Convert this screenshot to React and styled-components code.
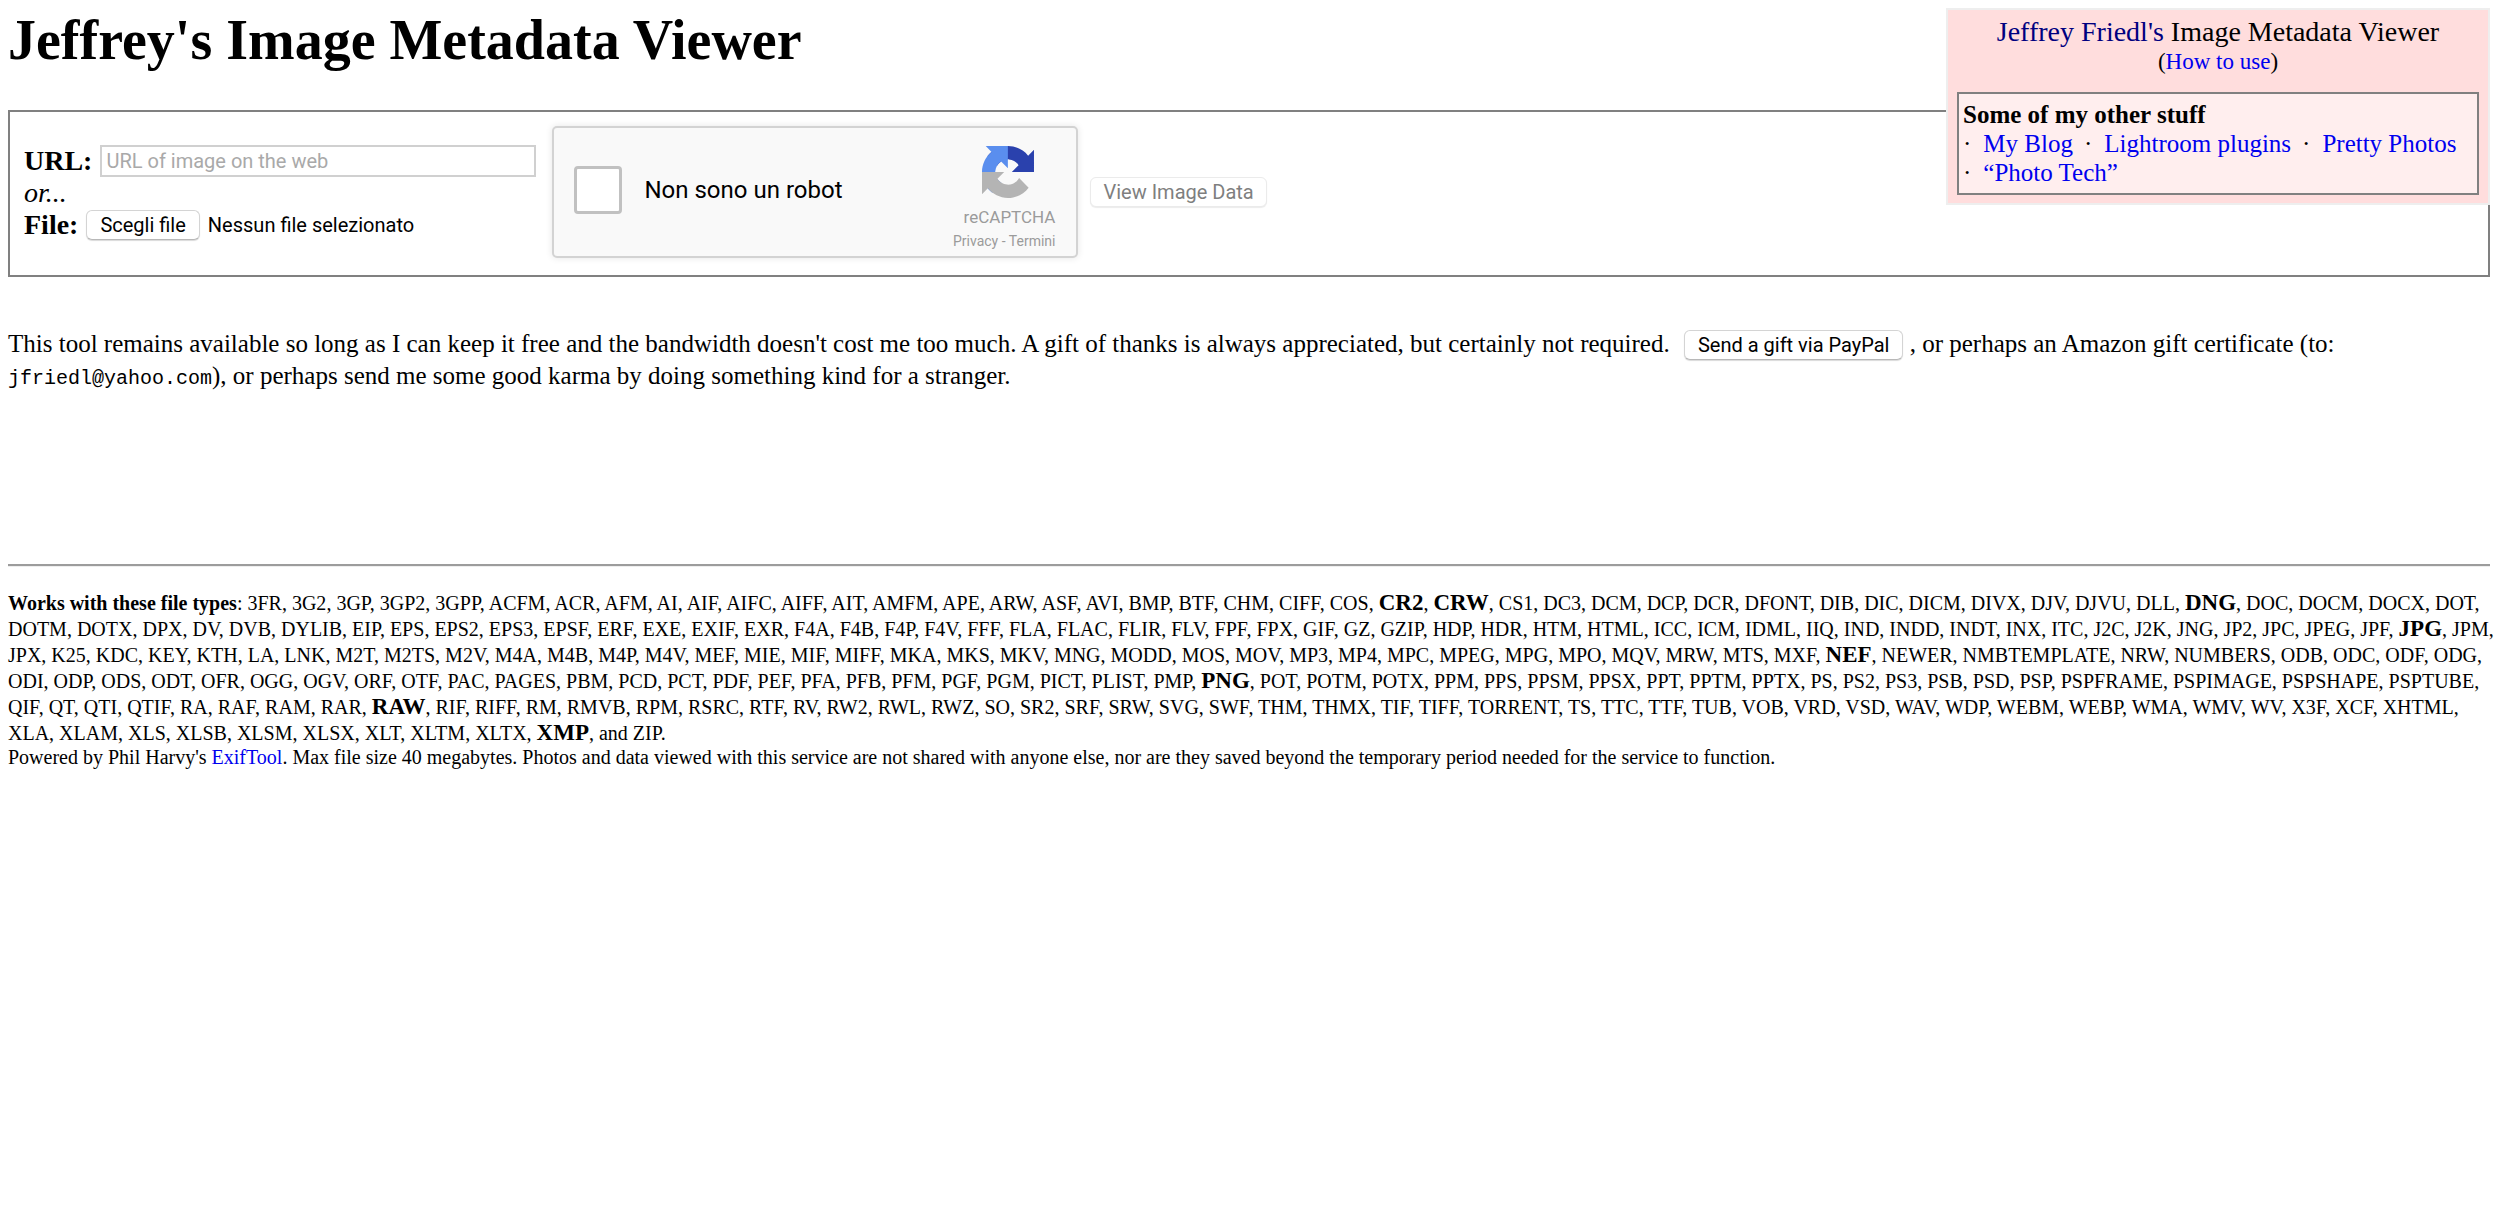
import React, {useRef, useState} from 'react';
import styled, {createGlobalStyle} from 'styled-components';

// the most popular types are drawn bigger
const POPULAR = ['CR2', 'CRW', 'DNG', 'JPG', 'NEF', 'PNG', 'RAW', 'XMP'];

const FILE_TYPES = [
  '3FR 3G2 3GP 3GP2 3GPP ACFM ACR AFM AI AIF AIFC AIFF AIT AMFM APE ARW ASF AVI BMP BTF CHM CIFF COS CR2 CRW CS1 DC3 DCM DCP DCR DFONT DIB DIC DICM DIVX DJV DJVU DLL DNG DOC DOCM DOCX DOT',
  'DOTM DOTX DPX DV DVB DYLIB EIP EPS EPS2 EPS3 EPSF ERF EXE EXIF EXR F4A F4B F4P F4V FFF FLA FLAC FLIR FLV FPF FPX GIF GZ GZIP HDP HDR HTM HTML ICC ICM IDML IIQ IND INDD INDT INX ITC J2C J2K JNG JP2 JPC JPEG JPF JPG JPM',
  'JPX K25 KDC KEY KTH LA LNK M2T M2TS M2V M4A M4B M4P M4V MEF MIE MIF MIFF MKA MKS MKV MNG MODD MOS MOV MP3 MP4 MPC MPEG MPG MPO MQV MRW MTS MXF NEF NEWER NMBTEMPLATE NRW NUMBERS ODB ODC ODF ODG',
  'ODI ODP ODS ODT OFR OGG OGV ORF OTF PAC PAGES PBM PCD PCT PDF PEF PFA PFB PFM PGF PGM PICT PLIST PMP PNG POT POTM POTX PPM PPS PPSM PPSX PPT PPTM PPTX PS PS2 PS3 PSB PSD PSP PSPFRAME PSPIMAGE PSPSHAPE PSPTUBE',
  'QIF QT QTI QTIF RA RAF RAM RAR RAW RIF RIFF RM RMVB RPM RSRC RTF RV RW2 RWL RWZ SO SR2 SRF SRW SVG SWF THM THMX TIF TIFF TORRENT TS TTC TTF TUB VOB VRD VSD WAV WDP WEBM WEBP WMA WMV WV X3F XCF XHTML',
  'XLA XLAM XLS XLSB XLSM XLSX XLT XLTM XLTX XMP',
].map((line) => line.split(' '));

const RecaptchaLogo = () => (
  <Logo viewBox="0 0 64 64" aria-hidden="true">
    <path
      fill="#2a41ad"
      d="M64 31.955l-.033-1.37V4.687l-7.16 7.16C50.948 4.674 42.033.093 32.05.093c-10.4 0-19.622 4.96-25.458 12.64l11.736 11.86a15.55 15.55 0 0 1 4.754-5.334c2.05-1.6 4.952-2.906 8.968-2.906.485 0 .86.057 1.135.163 4.976.393 9.288 3.14 11.828 7.124l-8.307 8.307L64 31.953"
    />
    <path
      fill="#5a8eee"
      d="M31.862.094l-1.37.033H4.594l7.16 7.16C4.58 13.147 0 22.06 0 32.046c0 10.4 4.96 19.622 12.64 25.458L24.5 45.768a15.55 15.55 0 0 1-5.334-4.754c-1.6-2.05-2.906-4.952-2.906-8.968 0-.485.057-.86.163-1.135.393-4.976 3.14-9.288 7.124-11.828l8.307 8.307L31.86.095"
    />
    <path
      fill="#b4b4b4"
      d="M.001 32.045l.033 1.37v25.898l7.16-7.16c5.86 7.173 14.774 11.754 24.76 11.754 10.4 0 19.622-4.96 25.458-12.64l-11.736-11.86a15.55 15.55 0 0 1-4.754 5.334c-2.05 1.6-4.952 2.906-8.968 2.906-.485 0-.86-.057-1.135-.163-4.976-.393-9.288-3.14-11.828-7.124l8.307-8.307c-10.522.04-22.4.066-27.295-.005"
    />
  </Logo>
);

const FilePicker = () => {
  const input = useRef(null);
  const [name, setName] = useState('Nessun file selezionato');

  return (
    <Row>
      <Label htmlFor="file">File:</Label>
      <HiddenFile
        id="file"
        type="file"
        ref={input}
        tabIndex={-1}
        onChange={(e) => e.target.files[0] && setName(e.target.files[0].name)}
      />
      <Button type="button" onClick={() => input.current.click()}>
        Scegli file
      </Button>
      <FileName>{name}</FileName>
    </Row>
  );
};

const Captcha = () => (
  <CaptchaStyle>
    <CaptchaLabel>
      <CaptchaCheck type="checkbox" />
      Non sono un robot
    </CaptchaLabel>
    <CaptchaBrand>
      <RecaptchaLogo />
      <CaptchaName>reCAPTCHA</CaptchaName>
      <CaptchaLinks>
        <a href="#privacy">Privacy</a> - <a href="#termini">Termini</a>
      </CaptchaLinks>
    </CaptchaBrand>
  </CaptchaStyle>
);

const SiteBox = () => (
  <SiteBoxStyle>
    <SiteTitle>
      <NavyLink href="#jfriedl">Jeffrey Friedl's</NavyLink> Image Metadata Viewer
    </SiteTitle>
    <SiteHelp>
      (<a href="#howto">How to use</a>)
    </SiteHelp>
    <OtherStuff>
      <b>Some of my other stuff</b>
      <StuffList>
        <li><a href="#blog">My Blog</a></li>
        <li><a href="#plugins">Lightroom plugins</a></li>
        <li><a href="#photos">Pretty Photos</a></li>
        <li><a href="#tech">“Photo Tech”</a></li>
      </StuffList>
    </OtherStuff>
  </SiteBoxStyle>
);

export default function App() {
  return (
    <Page>
      <GlobalStyle />
      <Title>Jeffrey's Image Metadata Viewer</Title>
      <SiteBox />
      <Form onSubmit={(e) => e.preventDefault()}>
        <Sources>
          <Row>
            <Label htmlFor="url">URL:</Label>
            <UrlInput id="url" type="text" placeholder="URL of image on the web" />
          </Row>
          <Row>
            <i>or...</i>
          </Row>
          <FilePicker />
        </Sources>
        <Captcha />
        <Button type="submit" disabled>
          View Image Data
        </Button>
      </Form>
      <Gift>
        This tool remains available so long as I can keep it free and the bandwidth doesn't cost me
        too much. A gift of thanks is always appreciated, but certainly not required.{' '}
        <Button type="button">Send a gift via PayPal</Button> , or perhaps an Amazon gift
        certificate (to: <code>jfriedl@yahoo.com</code>), or perhaps send me some good karma by
        doing something kind for a stranger.
      </Gift>
      <Rule />
      <Types>
        <b>Works with these file types</b>:{' '}
        {FILE_TYPES.map((line, i) => (
          <React.Fragment key={line[0]}>
            {i > 0 && <br />}
            {line.map((type) => (
              <React.Fragment key={type}>
                {POPULAR.includes(type) ? <Popular>{type}</Popular> : type},{' '}
              </React.Fragment>
            ))}
          </React.Fragment>
        ))}
        and ZIP.
      </Types>
      <Powered>
        Powered by Phil Harvy's <a href="#exiftool">ExifTool</a>. Max file size 40 megabytes. Photos
        and data viewed with this service are not shared with anyone else, nor are they saved beyond
        the temporary period needed for the service to function.
      </Powered>
    </Page>
  );
}

const GlobalStyle = createGlobalStyle`
  * {
    box-sizing: border-box;
  }
  body {
    margin: 0;
    background: #fff;
    color: #000;
    font-family: 'Liberation Serif', 'Times New Roman', serif;
    font-size: 25px;
    line-height: 32px;
  }
  a {
    color: #0000ee;
    text-decoration: none;
  }
`;

const Page = styled.main`
  position: relative;
  padding: 8px 10px 8px 8px;
`;

const Title = styled.h1`
  margin: 0 0 38px;
  font-size: 56px;
  line-height: 64px;
`;

const Form = styled.form`
  display: flex;
  align-items: center;
  padding: 14px 14px 17px;
  border: 2px solid #808080;
  > button {
    margin-left: 12px;
  }
`;

const Sources = styled.div`
  padding-top: 2px;
  font-size: 28px;
`;

const Row = styled.div`
  display: flex;
  align-items: center;
  height: 32px;
`;

const Label = styled.label`
  margin-right: 8px;
  font-weight: bold;
`;

const UrlInput = styled.input`
  width: 436px;
  height: 32px;
  padding: 0 4px;
  border: 2px solid #d0d0d0;
  font-family: Roboto, sans-serif;
  font-size: 20px;
  &::placeholder {
    color: #a9a9a9;
  }
`;

const HiddenFile = styled.input`
  position: absolute;
  opacity: 0;
  width: 1px;
  height: 1px;
`;

const Button = styled.button`
  height: 30px;
  padding: 0 13px;
  border: 1px solid #d4d4d4;
  border-bottom-color: #b8b8b8;
  border-radius: 6px;
  background: #fff;
  box-shadow: 0 1px 1px rgba(0, 0, 0, 0.15);
  color: #000;
  font-family: Roboto, sans-serif;
  font-size: 20px;
  line-height: 26px;
  &:disabled {
    padding: 0 12px;
    border-color: #ebebeb;
    box-shadow: 0 1px 1px rgba(0, 0, 0, 0.08);
    color: #7f7f7f;
  }
`;

const FileName = styled.span`
  margin-left: 8px;
  font-family: Roboto, sans-serif;
  font-size: 20px;
`;

const CaptchaStyle = styled.div`
  display: flex;
  justify-content: space-between;
  width: 526px;
  height: 132px;
  margin-left: 16px;
  padding: 18px 21px 0 20px;
  border: 2px solid #d3d3d3;
  border-radius: 5px;
  background: #f9f9f9;
  box-shadow: 0 0 6px 1px rgba(0, 0, 0, 0.08);
  font-family: Roboto, sans-serif;
`;

const CaptchaLabel = styled.label`
  display: flex;
  align-items: center;
  height: 88px;
  font-size: 24px;
`;

const CaptchaCheck = styled.input`
  appearance: none;
  width: 48px;
  height: 48px;
  margin: 0 22px 0 0;
  border: 3px solid #c1c1c1;
  border-radius: 4px;
  background: #fff;
`;

const CaptchaBrand = styled.div`
  display: flex;
  flex-direction: column;
  align-items: flex-end;
  color: #9b9b9b;
  line-height: 24px;
  a {
    color: inherit;
  }
`;

const Logo = styled.svg`
  width: 52px;
  height: 52px;
  margin: 0 21px 7px 0;
`;

const CaptchaName = styled.div`
  font-size: 17px;
`;

const CaptchaLinks = styled.div`
  font-size: 14px;
`;

const SiteBoxStyle = styled.aside`
  position: absolute;
  top: 8px;
  right: 10px;
  width: 544px;
  padding: 6px 9px 8px;
  border: 2px solid #eee;
  background: #fdd;
`;

const SiteTitle = styled.div`
  font-size: 28px;
  text-align: center;
`;

const NavyLink = styled.a`
  color: #000080;
`;

const SiteHelp = styled.div`
  margin-bottom: 16px;
  font-size: 23px;
  line-height: 28px;
  text-align: center;
`;

const OtherStuff = styled.div`
  padding: 6px 4px;
  border: 2px solid #808080;
  background: #fee;
  line-height: 29px;
`;

const StuffList = styled.ul`
  display: flex;
  flex-wrap: wrap;
  column-gap: 11px;
  margin: 0;
  padding: 0;
  list-style: none;
  li::before {
    content: '·';
    margin-right: 12px;
  }
`;

const Gift = styled.p`
  margin: 51px 0 172px;
  button {
    margin-left: 8px;
  }
  code {
    font-family: 'Liberation Mono', monospace;
    font-size: 20px;
    line-height: 24px;
  }
`;

const Rule = styled.hr`
  height: 3px;
  margin: 0 0 23px;
  border: 0;
  border-top: 2px solid #9c9c9c;
  border-bottom: 1px solid #eee;
`;

// runs a little into the page's right padding
const Types = styled.div`
  margin-right: -10px;
  font-size: 20px;
  line-height: 26px;
`;

const Popular = styled.b`
  font-size: 23px;
  line-height: 20px;
`;

const Powered = styled.div`
  font-size: 20px;
  line-height: 22px;
`;
